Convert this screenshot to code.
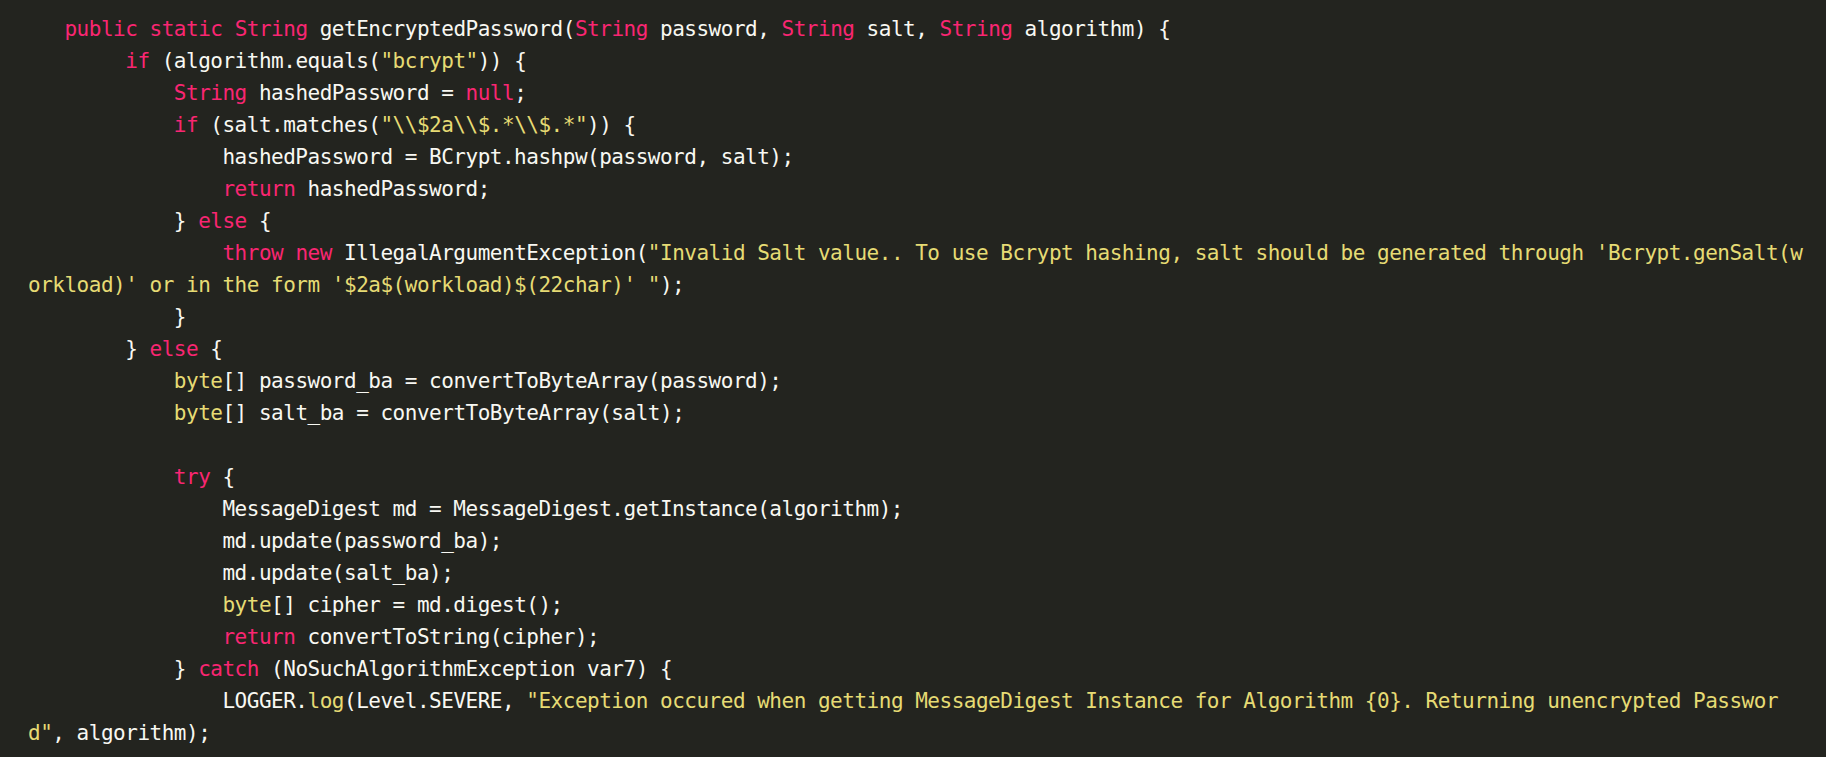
import React from 'react';

type Tok = [string, string];

const K = 'text-[#f92672]';
const S = 'text-[#e6db74]';
const P = 'text-[#f8f8f2]';

const lines: Tok[][] = [
  [[P, '   '], [K, 'public'], [P, ' '], [K, 'static'], [P, ' '], [K, 'String'], [P, ' getEncryptedPassword('], [K, 'String'], [P, ' password, '], [K, 'String'], [P, ' salt, '], [K, 'String'], [P, ' algorithm) {']],
  [[P, '        '], [K, 'if'], [P, ' (algorithm.equals('], [S, '"bcrypt"'], [P, ')) {']],
  [[P, '            '], [K, 'String'], [P, ' hashedPassword = '], [K, 'null'], [P, ';']],
  [[P, '            '], [K, 'if'], [P, ' (salt.matches('], [S, '"\\\\$2a\\\\$.*\\\\$.*"'], [P, ')) {']],
  [[P, '                hashedPassword = BCrypt.hashpw(password, salt);']],
  [[P, '                '], [K, 'return'], [P, ' hashedPassword;']],
  [[P, '            } '], [K, 'else'], [P, ' {']],
  [[P, '                '], [K, 'throw'], [P, ' '], [K, 'new'], [P, ' IllegalArgumentException('], [S, '"Invalid Salt value.. To use Bcrypt hashing, salt should be generated through \'Bcrypt.genSalt(w']],
  [[S, 'orkload)\' or in the form \'$2a$(workload)$(22char)\' "'], [P, ');']],
  [[P, '            }']],
  [[P, '        } '], [K, 'else'], [P, ' {']],
  [[P, '            '], [S, 'byte'], [P, '[] password_ba = convertToByteArray(password);']],
  [[P, '            '], [S, 'byte'], [P, '[] salt_ba = convertToByteArray(salt);']],
  [[P, '']],
  [[P, '            '], [K, 'try'], [P, ' {']],
  [[P, '                MessageDigest md = MessageDigest.getInstance(algorithm);']],
  [[P, '                md.update(password_ba);']],
  [[P, '                md.update(salt_ba);']],
  [[P, '                '], [S, 'byte'], [P, '[] cipher = md.digest();']],
  [[P, '                '], [K, 'return'], [P, ' convertToString(cipher);']],
  [[P, '            } '], [K, 'catch'], [P, ' (NoSuchAlgorithmException var7) {']],
  [[P, '                LOGGER.'], [S, 'log'], [P, '(Level.SEVERE, '], [S, '"Exception occured when getting MessageDigest Instance for Algorithm {0}. Returning unencrypted Passwor']],
  [[S, 'd"'], [P, ', algorithm);']],
];

export default function App() {
  return (
    <div className="w-[1826px] h-[757px] overflow-hidden bg-[#23241f]">
      <pre className="pl-[28px] pt-[13px] font-['DejaVu_Sans_Mono',monospace] text-[21px] leading-[32px] tracking-[-0.49px] text-[#f8f8f2]">
        {lines.map((line, i) => (
          <div key={i} className="h-[32px] whitespace-pre">
            {line.map(([c, t], j) => (
              <span key={j} className={c}>
                {t}
              </span>
            ))}
          </div>
        ))}
      </pre>
    </div>
  );
}
